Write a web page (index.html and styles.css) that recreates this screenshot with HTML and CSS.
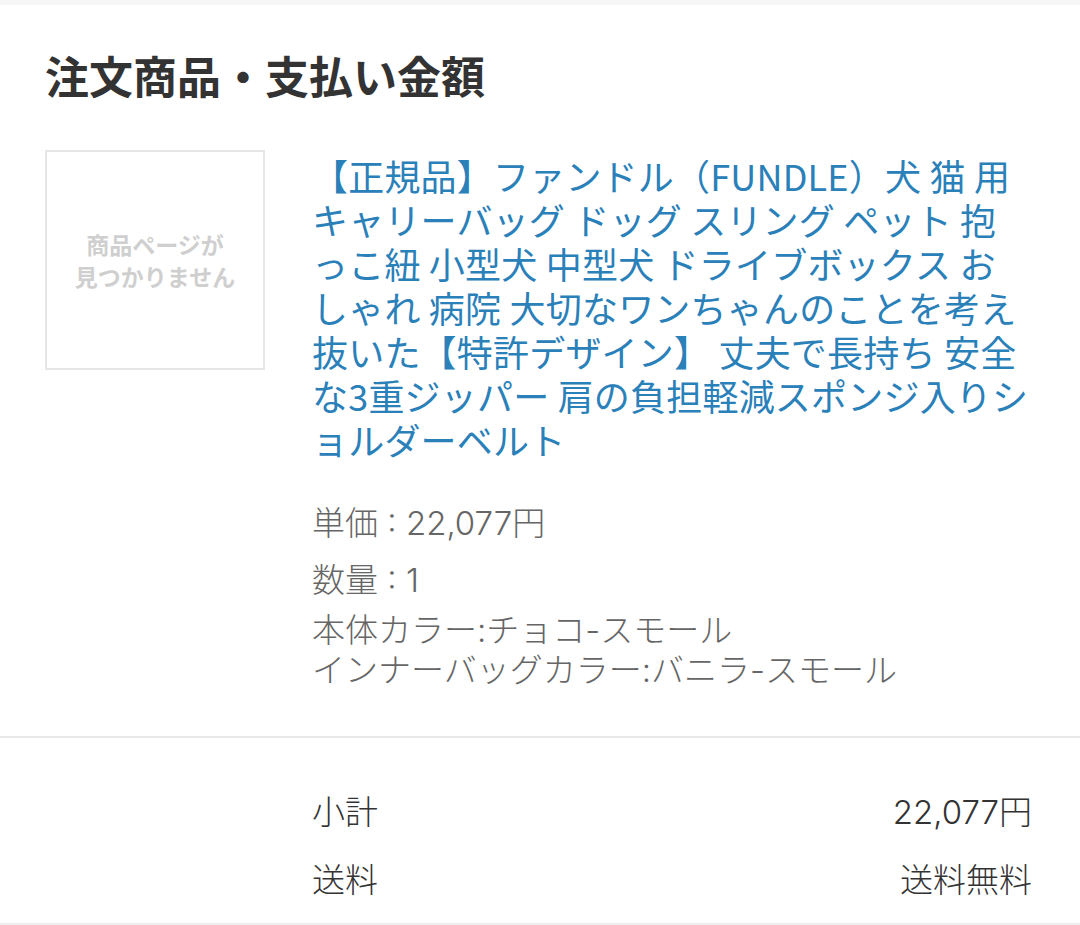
FILE: index.html
```html
<!DOCTYPE html>
<html lang="ja">
<head>
<meta charset="utf-8">
<title>注文商品・支払い金額</title>
<link rel="stylesheet" href="styles.css">
</head>
<body>
<div class="topband"></div>
<section class="order">
  <h2 class="order-title">注文商品・支払い金額</h2>
  <div class="item">
    <div class="thumb">
      <span class="thumb-text">商品ページが<br>見つかりません</span>
    </div>
    <div class="item-body">
      <p class="item-name">【正規品】ファンドル（FUNDLE）犬 猫 用<br>キャリーバッグ ドッグ スリング ペット 抱<br>っこ紐 小型犬 中型犬 ドライブボックス お<br>しゃれ 病院 大切なワンちゃんのことを考え<br>抜いた【特許デザイン】 丈夫で長持ち 安全<br>な3重ジッパー 肩の負担軽減スポンジ入りシ<br>ョルダーベルト</p>
      <p class="item-price">単価 : 22,077円</p>
      <p class="item-qty">数量 : 1</p>
      <p class="item-variant">本体カラー:チョコ-スモール<br>インナーバッグカラー:バニラ-スモール</p>
    </div>
  </div>
</section>
<section class="summary">
  <div class="summary-row">
    <span class="summary-label">小計</span>
    <span class="summary-value">22,077円</span>
  </div>
  <div class="summary-row">
    <span class="summary-label">送料</span>
    <span class="summary-value">送料無料</span>
  </div>
</section>
</body>
</html>
```
FILE: styles.css
```css
* { box-sizing: border-box; }
body {
  margin: 0;
  background: #ffffff;
  font-family: "Noto Sans CJK JP", "Noto Sans", sans-serif;
  color: #333333;
}
p, h2 { margin: 0; }
.topband {
  height: 5px;
  background: #f6f6f6;
}
.order {
  padding: 40px 20px 46px 45px;
  border-bottom: 2px solid #e8e8e8;
}
.order-title {
  font-size: 44px;
  font-weight: 700;
  line-height: 60px;
  color: #333333;
}
.item {
  display: flex;
  gap: 47px;
  margin-top: 45px;
}
.thumb {
  flex: 0 0 220px;
  height: 220px;
  border: 2px solid #e6e6e6;
  display: flex;
  align-items: center;
  justify-content: center;
  text-align: center;
}
.thumb-text {
  font-size: 23px;
  font-weight: 700;
  line-height: 32px;
  color: #cfcfcf;
}
.item-body {
  flex: 1;
  padding-top: 3px;
}
.item-name {
  font-size: 36px;
  line-height: 44px;
  color: #2a80b9;
  white-space: nowrap;
  letter-spacing: 0.2px;
}
.item-price,
.item-qty,
.item-variant {
  font-family: "Inter", "Noto Sans CJK JP", sans-serif;
  font-size: 33px;
  font-weight: 300;
  line-height: 40px;
  color: #666666;
}
.item-price { margin-top: 42px; }
.item-qty { margin-top: 17px; }
.item-variant { margin-top: 10px; }
.summary {
  padding: 52px 48px 21px 312px;
  border-bottom: 2px solid #eeeeee;
}
.summary-row {
  display: flex;
  justify-content: space-between;
  font-family: "Inter", "Noto Sans CJK JP", sans-serif;
  font-size: 33px;
  font-weight: 300;
  line-height: 44px;
  color: #333333;
}
.summary-row + .summary-row { margin-top: 24px; }
```
